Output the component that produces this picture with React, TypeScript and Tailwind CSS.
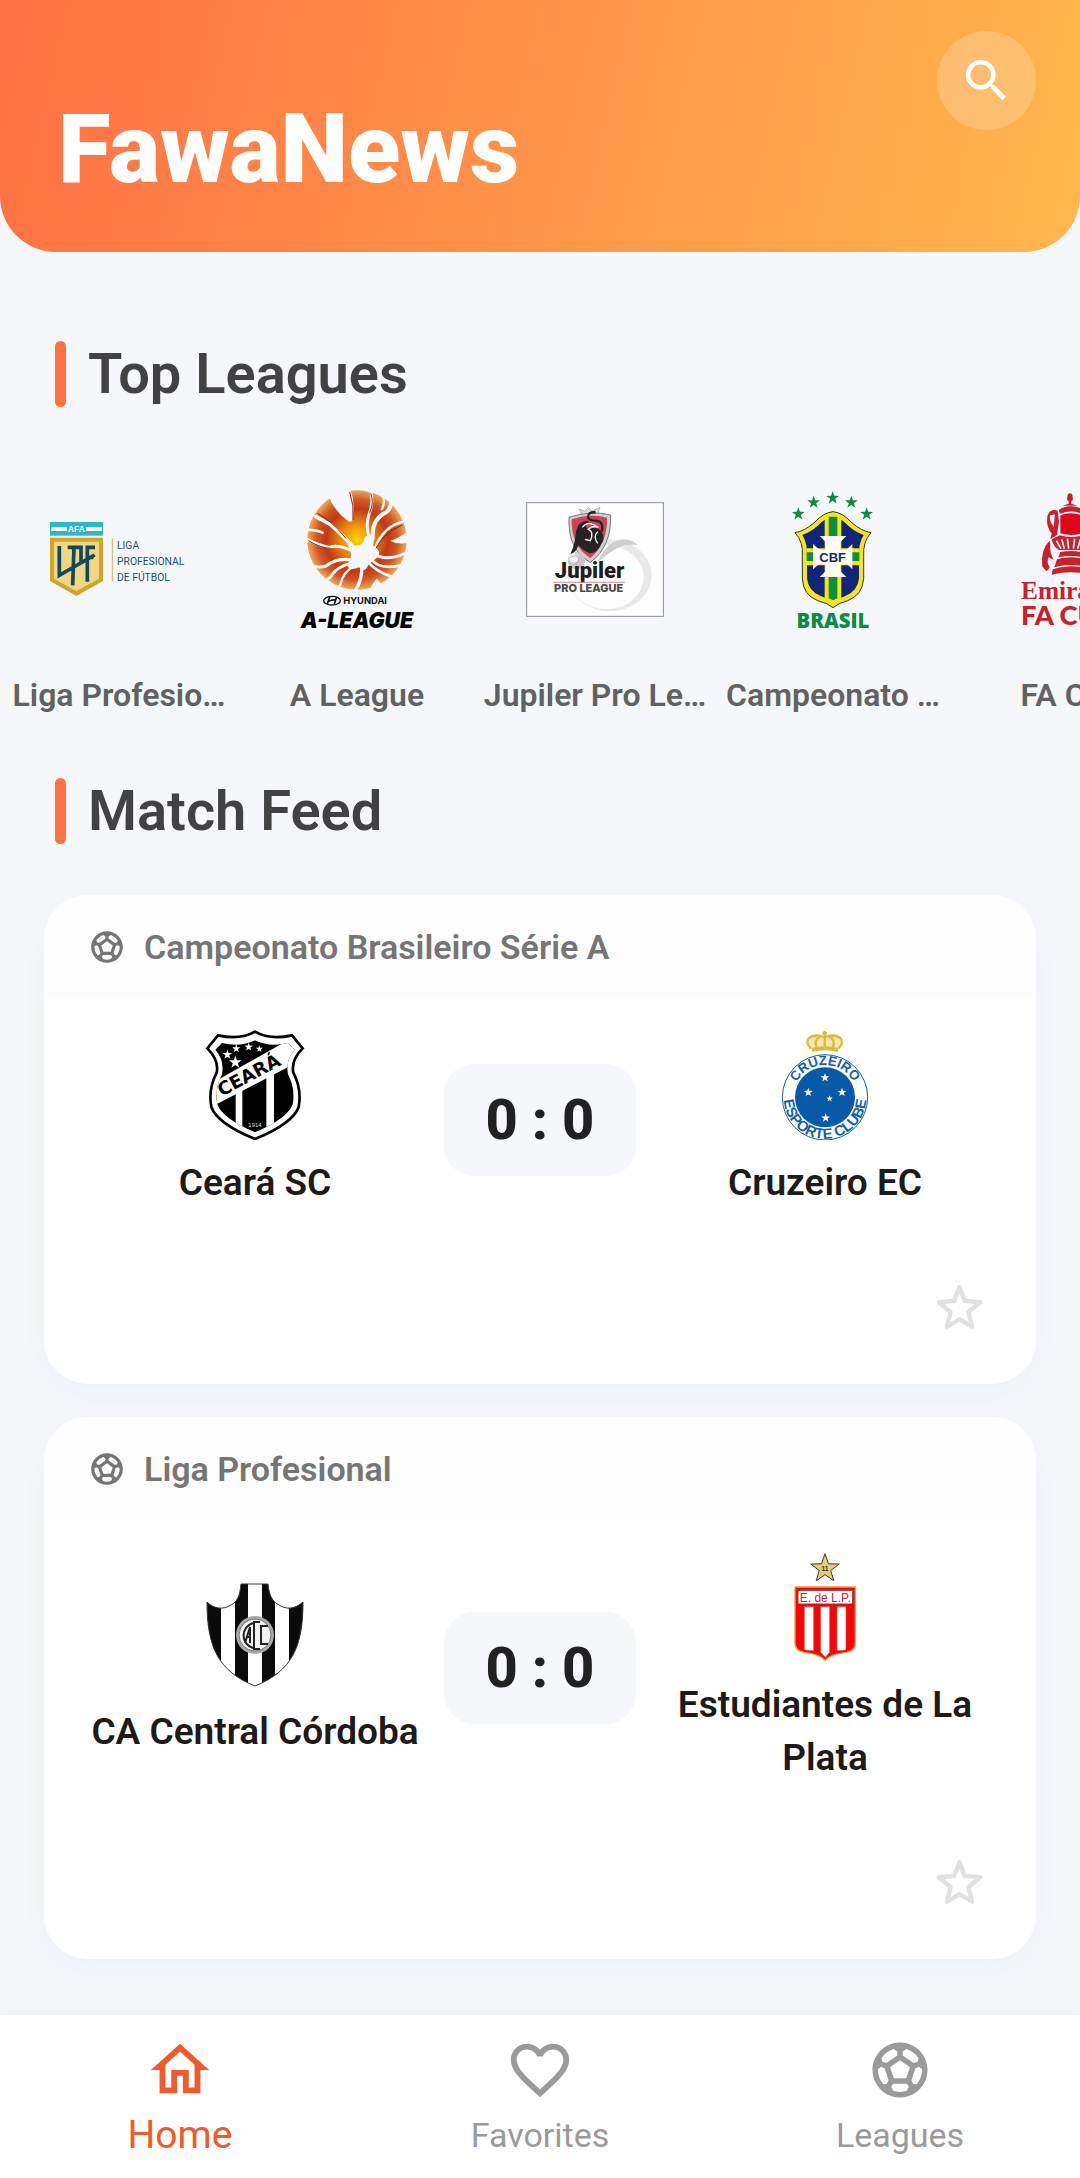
import type { ReactNode } from "react";
import {
  MdFavoriteBorder,
  MdOutlineHome,
  MdOutlineSportsSoccer,
  MdSearch,
} from "react-icons/md";

// Five-pointed star used by several crests
function Star({ x, y, r, fill, stroke }: { x: number; y: number; r: number; fill: string; stroke?: string }) {
  const points = Array.from({ length: 10 }, (_, i) => {
    const radius = i % 2 === 0 ? r : r * 0.4;
    const angle = (Math.PI / 5) * i - Math.PI / 2;
    return `${x + radius * Math.cos(angle)},${y + radius * Math.sin(angle)}`;
  }).join(" ");
  return <polygon points={points} fill={fill} stroke={stroke} strokeWidth={stroke ? 3 : 0} />;
}

function LigaProfesionalLogo() {
  return (
    <svg viewBox="150 60 414 414" className="size-full">
      <rect x="150" y="156" width="159" height="41" fill="#2bb8cf" />
      <rect x="154" y="172" width="47" height="11" fill="#fff" />
      <rect x="258" y="172" width="47" height="11" fill="#fff" />
      <text x="229" y="187" textAnchor="middle" fontFamily="Liberation Sans" fontWeight="700" fontSize="25" fill="#fff">AFA</text>
      <path d="M150 203H309V333L229 378L150 333Z" fill="#cfa52c" />
      <path d="M162 215H297V326L229 364L162 326Z" fill="#f3d681" />
      <path d="M178 228V316L284 255M203 232H222L218 346M222 232H243V282M262 335V232H285M262 262H280" fill="none" stroke="#11495f" strokeWidth="11" />
      <path d="M337 204V334" stroke="#d6b45a" strokeWidth="3" />
      <g fontFamily="Roboto" fontSize="31" fill="#1b5273">
        <text x="351" y="238">LIGA</text>
        <text x="351" y="286">PROFESIONAL</text>
        <text x="351" y="333">DE FÚTBOL</text>
      </g>
    </svg>
  );
}

function ALeagueLogo() {
  return (
    <svg viewBox="861 60 414 414" className="size-full">
      <defs>
        <radialGradient id="aleague" gradientUnits="userSpaceOnUse" cx="1068" cy="210" r="150">
          <stop offset="0" stopColor="#ffd400" />
          <stop offset=".3" stopColor="#ee9010" />
          <stop offset=".62" stopColor="#c03a16" />
          <stop offset=".8" stopColor="#cf5424" />
          <stop offset="1" stopColor="#f0ac55" />
        </radialGradient>
      </defs>
      <circle cx="1068" cy="210" r="149" fill="url(#aleague)" />
      <g fill="#f5f7fb">
        <path d="M980 72Q1000 125 1040 152Q1058 165 1057 130Q1062 90 1046 55Z" />
        <path d="M1038 222Q1085 240 1092 200Q1128 185 1116 228Q1150 245 1122 268L1102 285Q1090 312 1074 292Q1045 305 1038 284Q1062 255 1038 222Z" />
        <path d="M1215 188Q1190 205 1168 212Q1190 225 1222 218Z" />
        <path d="M1100 370Q1118 335 1128 325Q1140 345 1150 348L1130 372Z" />
      </g>
      <g fill="none" stroke="#f5f7fb" strokeLinecap="round">
        <path strokeWidth="9" d="M1105 205Q1092 165 1105 130Q1118 95 1109 62" />
        <path strokeWidth="12" d="M1115 205Q1112 150 1150 130Q1172 120 1170 88" />
        <path strokeWidth="7" d="M1147 82Q1152 102 1142 118" />
        <path strokeWidth="8" d="M1120 240Q1145 170 1203 156" />
        <path strokeWidth="9" d="M1118 252Q1155 275 1213 250" />
        <path strokeWidth="8" d="M1110 265Q1130 300 1198 287" />
        <path strokeWidth="8" d="M1100 275Q1125 305 1172 320" />
        <path strokeWidth="10" d="M1082 285Q1085 330 1062 362" />
        <path strokeWidth="7" d="M1060 288Q1025 305 1018 345Q1010 355 1000 358" />
        <path strokeWidth="9" d="M1055 278Q1010 290 995 312Q985 330 968 332" />
        <path strokeWidth="9" d="M1050 270Q1010 262 975 288Q960 293 944 290" />
        <path strokeWidth="9" d="M1060 245Q1010 222 985 232Q950 225 918 208" />
        <path strokeWidth="11" d="M1058 232Q1020 190 990 165Q965 150 944 140" />
        <path strokeWidth="8" d="M920 180Q945 178 965 188" />
      </g>
      <g fill="none" stroke="#8e2114" strokeWidth="3">
        <path d="M1046 66Q1060 105 1056 150M1109 70Q1120 95 1106 130M949 130Q990 150 1035 205M922 212Q960 235 990 235M1125 235Q1150 185 1205 165" />
      </g>
      <ellipse cx="993" cy="392" rx="25" ry="13" fill="none" stroke="#111" strokeWidth="4" />
      <path d="M986 381L979 402M1007 381L1000 402M984 394Q993 388 1003 390" fill="none" stroke="#111" strokeWidth="5" />
      <text x="1027" y="402" fontFamily="Inter" fontWeight="700" fontSize="28" fill="#111">HYUNDAI</text>
      <text x="1068" y="474" textAnchor="middle" fontFamily="Inter" fontWeight="900" fontStyle="italic" fontSize="64" fill="#000">A-LEAGUE</text>
    </svg>
  );
}

function JupilerLogo() {
  return (
    <svg viewBox="255 60 414 414" className="size-full">
      <rect x="257" y="98" width="410" height="341" fill="#fefefe" stroke="#8c8c8c" strokeWidth="3" />
      <path
        fillRule="evenodd"
        fill="#e8e8e8"
        d="M380 316A126 108 0 1 1 632 316A126 108 0 1 1 380 316ZM384 322A112 96 0 1 0 608 322A112 96 0 1 0 384 322Z"
      />
      <path d="M470 275Q500 210 550 208Q580 212 590 225Q540 215 490 262Z" fill="#cecece" />
      <path d="M413 116L432 124L442 112L452 124L477 112L468 136H424Z" fill="#dcdcdc" stroke="#999" strokeWidth="2" />
      <path d="M384 142Q450 120 509 135Q512 230 448 277Q380 240 384 142Z" fill="#cfcfcf" stroke="#777" strokeWidth="3" />
      <path d="M392 148Q450 130 498 143Q500 220 448 264Q390 230 392 148Z" fill="#cc4258" />
      <path d="M405 185Q412 150 445 152Q425 165 440 178Q470 165 484 190Q492 210 480 222Q470 250 445 250Q425 240 412 226Q405 250 388 252Q402 225 405 185Z" fill="#252323" />
      <path d="M464 127Q440 125 441 142Q445 152 465 152Q490 155 482 185" fill="none" stroke="#252323" strokeWidth="7" />
      <path d="M424 172Q440 150 472 172Q455 165 442 178Q460 185 448 212L432 208M470 185Q455 200 470 220" fill="none" stroke="#fff" strokeWidth="4" />
      <circle cx="406" cy="272" r="26" fill="#c9c9c9" />
      <circle cx="399" cy="264" r="14" fill="#f1f1f1" />
      <path d="M388 262L406 256L415 270L402 284" fill="none" stroke="#999" strokeWidth="2" />
      <text x="446" y="324" textAnchor="middle" fontFamily="Roboto" fontWeight="900" fontSize="66" fill="#1f1d1d">Jupiler</text>
      <path d="M336 337H551" stroke="#d88a94" strokeWidth="3" />
      <text x="443" y="367" textAnchor="middle" fontFamily="Inter" fontWeight="800" fontSize="33" fill="#4a4848">PRO LEAGUE</text>
    </svg>
  );
}

function BrasilLogo() {
  const shield = "M1176 125Q1205 128 1230 156Q1262 184 1290 188Q1265 215 1268 260V325Q1265 375 1220 392Q1190 400 1176 413Q1162 400 1130 392Q1086 375 1084 325V260Q1088 215 1062 188Q1090 184 1122 156Q1147 128 1176 125Z";
  return (
    <svg viewBox="969 60 414 414" className="size-full">
      <Star x={1072} y={132} r={20} fill="#0b8b45" />
      <Star x={1118} y={97} r={20} fill="#0b8b45" />
      <Star x={1175} y={84} r={20} fill="#0b8b45" />
      <Star x={1231} y={97} r={20} fill="#0b8b45" />
      <Star x={1277} y={132} r={20} fill="#0b8b45" />
      <path d={shield} fill="#f7e51c" stroke="#25324f" strokeWidth="3" />
      <path d="M1176 140Q1199 142 1220 166Q1245 188 1268 195Q1252 220 1254 260V325Q1250 364 1213 378Q1190 386 1176 396Q1162 386 1139 378Q1102 364 1098 325V260Q1100 220 1084 195Q1107 188 1132 166Q1153 142 1176 140Z" fill="#10247a" />
      <path d="M1151 135H1201V392L1176 402L1151 392Z" fill="#f7e51c" />
      <path d="M1098 235H1254V286H1098Z" fill="#f7e51c" />
      <path d="M1163 140H1189V385L1176 391L1163 385Z" fill="#0d8f3d" />
      <path d="M1097 247H1255V273H1097Z" fill="#0d8f3d" />
      <path d="M1136 198H1216L1198 216V240L1218 238L1234 222V298L1218 282L1198 284V304L1216 321H1136L1154 304V284L1134 282L1116 298V222L1134 238L1154 240V216Z" fill="#fff" />
      <text x="1175" y="275" textAnchor="middle" fontFamily="Liberation Sans" fontWeight="700" fontSize="39" fill="#1a2a6c">CBF</text>
      <text x="1176" y="474" textAnchor="middle" fontFamily="Open Sans" fontWeight="800" fontSize="61" fill="#0b8b45">BRASIL</text>
    </svg>
  );
}

function FaCupLogo() {
  return (
    <svg viewBox="363 60 414 414" className="size-full">
      <g fill="#c9202c">
        <path d="M559 82Q559 70 567 70Q575 70 575 82Q578 90 571 94V101L590 107H545L563 101V94Q556 90 559 82Z" />
        <path d="M533 120Q550 108 570 109Q590 108 607 120L603 131Q570 118 537 131Z" />
        <path d="M538 136Q570 123 602 136V190Q570 200 538 190Z" fill="#e0061a" />
        <path d="M530 122Q500 112 498 150Q498 175 512 190L508 208L528 195L534 155ZM522 133L518 170Q502 150 508 136Z" />
        <path d="M610 122Q640 112 642 150Q642 175 628 190L632 208L612 195L606 155Z" />
        <path d="M536 196Q570 206 604 196L628 208Q622 232 606 240H534Q518 232 512 208Z" />
        <path d="M505 212Q478 240 484 290L497 304L506 292Q495 275 503 262L518 270Q505 245 508 222Z" />
        <path d="M538 246Q570 240 602 246L608 262Q570 254 532 262Z" />
        <path d="M528 268Q570 256 612 268L620 292Q570 278 520 292Z" />
        <path d="M515 298Q570 280 625 298L628 314Q570 300 512 314Z" />
      </g>
      <path d="M526 212L540 236M542 208L550 236M559 206L563 236M581 206L577 236M598 208L590 236" stroke="#f5f7fb" strokeWidth="5" />
      <text x="420" y="386" fontFamily="Liberation Serif" fontWeight="700" fontSize="76" fill="#c9202c">Emirates</text>
      <text x="420" y="464" fontFamily="Lato" fontWeight="900" fontSize="82" fill="#c9202c">FA CUP</text>
    </svg>
  );
}

function CearaCrest() {
  const shield = "M195 32Q240 58 306 43L338 82Q302 118 310 155Q336 205 326 258Q308 308 195 354Q82 308 64 258Q54 205 80 155Q88 118 52 82L84 43Q150 58 195 32Z";
  return (
    <svg viewBox="30 27 330 330" className="size-full">
      <defs>
        <clipPath id="ceara">
          <path d="M195 58Q240 80 294 66L314 86Q286 118 294 160Q317 205 308 250Q294 292 195 334Q96 292 82 250Q73 205 96 160Q104 118 76 86L96 66Q150 80 195 58Z" />
        </clipPath>
      </defs>
      <path d={shield} fill="#fff" stroke="#000" strokeWidth="8" />
      <g clipPath="url(#ceara)">
        <rect x="30" y="27" width="330" height="330" fill="#000" />
        <path d="M137 180H157V357H137ZM229 140H252V357H229Z" fill="#fff" />
        <path d="M60 190L290 60L345 50V112L60 260Z" fill="#fff" />
      </g>
      <text transform="translate(95 227) rotate(-28)" fontFamily="DejaVu Sans" fontWeight="700" fontSize="55" fill="#000">CEARÁ</text>
      <Star x={136} y={124} r={20} fill="#fff" />
      <Star x={112} y={101} r={15} fill="#fff" />
      <Star x={139} y={83} r={13} fill="#fff" />
      <Star x={176} y={78} r={13} fill="#fff" />
      <Star x={208} y={84} r={11} fill="#fff" />
      <text x="195" y="317" textAnchor="middle" fontFamily="Liberation Sans" fontSize="18" fill="#ddd">1914</text>
    </svg>
  );
}

function CruzeiroCrest() {
  return (
    <svg viewBox="0 27 330 330" className="size-full">
      <defs>
        <path id="cruzeiro-top" d="M68 229A97 97 0 0 1 262 229" />
        <path id="cruzeiro-bottom" d="M44 202A124 124 0 1 0 286 202" />
      </defs>
      <path d="M122 86Q100 62 118 50Q136 40 164 48Q192 40 210 50Q228 62 206 86Z" fill="#f6e6ae" />
      <g fill="none" stroke="#e0b83a" strokeWidth="7">
        <path d="M122 82Q104 62 118 50Q136 38 164 48Q192 38 210 50Q224 62 206 82" />
        <path d="M140 80Q130 56 150 46M188 80Q198 56 178 46M164 30V80M157 37H171" />
        <path d="M126 87Q164 76 204 87" strokeWidth="12" />
      </g>
      <circle cx="165" cy="229" r="128" fill="#fff" stroke="#1560a8" strokeWidth="3" />
      <circle cx="165" cy="229" r="90" fill="#075aa8" />
      <g fontFamily="Liberation Sans" fontWeight="700" fill="#1560a8">
        <text fontSize="40"><textPath href="#cruzeiro-top" startOffset="50%" textAnchor="middle">CRUZEIRO</textPath></text>
        <text fontSize="44"><textPath href="#cruzeiro-bottom" startOffset="50%" textAnchor="middle">ESPORTE CLUBE</textPath></text>
      </g>
      <Star x={165} y={170} r={14} fill="#fff" />
      <Star x={115} y={214} r={14} fill="#fff" />
      <Star x={216} y={214} r={14} fill="#fff" />
      <Star x={179} y={233} r={10} fill="#fff" />
      <Star x={167} y={291} r={14} fill="#fff" />
    </svg>
  );
}

function CordobaCrest() {
  const shield = "M41 5H68C69 17 73 23 79 26C87 31 95 30 103 23C103 68 92 92 55 107C18 92 7 68 7 23C14 30 23 31 31 26C37 23 40 17 41 5Z";
  return (
    <svg viewBox="0 0 110 110" className="size-full">
      <defs>
        <clipPath id="cordoba">
          <path d={shield} />
        </clipPath>
      </defs>
      <g clipPath="url(#cordoba)">
        <rect width="110" height="110" fill="#fff" />
        <path d="M6 0H21V110H6ZM35 0H48V110H35ZM62 0H75V110H62ZM89 0H104V110H89Z" fill="#0a0a0a" />
      </g>
      <path d={shield} fill="none" stroke="#333" strokeWidth="1" />
      <circle cx="55" cy="56" r="19" fill="#aaa" />
      <circle cx="55" cy="56" r="16" fill="#f2f2f2" stroke="#777" strokeWidth="1" />
      <g fill="none" stroke="#222" strokeWidth="2">
        <path d="M53 44A13 13 0 0 0 53 69M45 64L50 48V64M46 58H50M60 43H54V70H60M68 47H61V65H68" />
      </g>
    </svg>
  );
}

function EstudiantesCrest() {
  return (
    <svg viewBox="510 156 330 330" className="size-full">
      <Star x={675} y={206} r={45} fill="#e8cd73" stroke="#3a3a3a" />
      <text x="675" y="213" textAnchor="middle" fontFamily="Liberation Sans" fontWeight="700" fontSize="20" fill="#333">11</text>
      <path d="M585 261H766V430Q766 452 740 457Q690 462 675 481Q660 462 612 457Q585 452 585 430Z" fill="#f50505" stroke="#e8a13e" strokeWidth="4" />
      <path d="M594 271H758V312H594Z" fill="#fff" stroke="#b3262b" strokeWidth="3" />
      <path d="M613 320H641V452L613 450ZM662 320H689V457L676 472L662 457ZM711 320H738V450L711 452Z" fill="#fff" stroke="#d9534f" strokeWidth="2" />
      <text x="676" y="306" textAnchor="middle" fontFamily="Liberation Sans" fontSize="36" fill="#c1272d">E. de L.P.</text>
    </svg>
  );
}

// Names are already shortened to the width of a carousel item
const leagues: { name: string; logo: ReactNode }[] = [
  { name: "Liga Profesio…", logo: <LigaProfesionalLogo /> },
  { name: "A League", logo: <ALeagueLogo /> },
  { name: "Jupiler Pro Le…", logo: <JupilerLogo /> },
  { name: "Campeonato …", logo: <BrasilLogo /> },
  { name: "FA Cup", logo: <FaCupLogo /> },
];

type Team = { name: string; crest: ReactNode };

const matches: { league: string; home: Team; away: Team; score: string }[] = [
  {
    league: "Campeonato Brasileiro Série A",
    home: { name: "Ceará SC", crest: <CearaCrest /> },
    away: { name: "Cruzeiro EC", crest: <CruzeiroCrest /> },
    score: "0 : 0",
  },
  {
    league: "Liga Profesional",
    home: { name: "CA Central Córdoba", crest: <CordobaCrest /> },
    away: { name: "Estudiantes de La Plata", crest: <EstudiantesCrest /> },
    score: "0 : 0",
  },
];

function SectionTitle({ children }: { children: ReactNode }) {
  return (
    <div className="flex items-center gap-[22px] px-[55px]">
      <span className="h-[66px] w-[11px] rounded-full bg-[#ff7043]" />
      <h2 className="text-[56px] leading-[66px] font-semibold text-[#424242]">{children}</h2>
    </div>
  );
}

function TeamColumn({ team }: { team: Team }) {
  return (
    <div className="flex min-w-0 flex-1 flex-col items-center gap-4">
      <div className="size-[110px]">{team.crest}</div>
      <p className="text-center text-[37px] leading-[53px] font-semibold text-[#1e1a18]">{team.name}</p>
    </div>
  );
}

export default function App() {
  return (
    <div className="flex min-h-screen flex-col bg-[#f5f7fb] font-[Roboto,sans-serif]">
      {/* Header */}
      <header className="flex items-start justify-between rounded-b-[56px] bg-[linear-gradient(103deg,#ff7043,#ffb74d)] pt-[31px] pr-11 pb-[51px] pl-[58px]">
        <h1 className="mt-[66px] text-[96px] leading-[104px] font-black text-white">FawaNews</h1>
        <button type="button" aria-label="Search" className="flex size-[99px] items-center justify-center rounded-full bg-white/20 text-white">
          <MdSearch className="size-[55px]" />
        </button>
      </header>

      <main className="flex-1">
        {/* Leagues carousel */}
        <section className="mt-[89px]">
          <SectionTitle>Top Leagues</SectionTitle>
          <ul className="mt-[83px] flex gap-4 overflow-hidden pl-2">
            {leagues.map((league) => (
              <li key={league.name} className="w-[222px] shrink-0">
                <a href="#leagues" className="flex flex-col items-center gap-[47px]">
                  <span className="size-[138px]">{league.logo}</span>
                  <span className="text-[32px] leading-10 font-semibold whitespace-nowrap text-[#616161]">{league.name}</span>
                </a>
              </li>
            ))}
          </ul>
        </section>

        {/* Match cards */}
        <section className="mt-[63px] mb-14">
          <SectionTitle>Match Feed</SectionTitle>
          <div className="mt-[51px] flex flex-col gap-[33px] px-11">
            {matches.map((match) => (
              <article key={match.league} className="overflow-hidden rounded-[44px] bg-white shadow-[0_11px_28px_rgba(30,50,80,0.03)]">
                <div className="flex h-[103px] items-center gap-[18px] bg-[#fdfdfd] px-11 text-[#757575]">
                  <MdOutlineSportsSoccer className="size-[38px]" />
                  <h3 className="text-[34px] leading-10 font-semibold">{match.league}</h3>
                </div>
                <div className="flex items-center gap-[22px] px-11 pt-8 pb-[49px]">
                  <TeamColumn team={match.home} />
                  <div className="flex h-28 w-48 items-center justify-center rounded-[30px] bg-[#f5f7fb] text-[56px] leading-[66px] font-extrabold text-[#212121]">
                    {match.score}
                  </div>
                  <TeamColumn team={match.away} />
                </div>
                <div className="flex justify-end pr-[27px] pb-[27px]">
                  <button type="button" aria-label="Add to favorites" className="p-[22px] text-[#e0e0e0]">
                    <svg viewBox="0 0 24 24" className="size-[55px]" fill="none" stroke="currentColor" strokeWidth="1.9" strokeLinejoin="round">
                      <path d="M12 3.1L14.3 9.1L21 9.7L15.9 14L17.5 20.4L12 17.1L6.5 20.4L8.1 14L3 9.7L9.7 9.1Z" />
                    </svg>
                  </button>
                </div>
              </article>
            ))}
          </div>
        </section>
      </main>

      {/* Bottom navigation */}
      <nav className="grid grid-cols-3 bg-white pt-5 pb-[23px] text-[#9a9a9a] shadow-[0_-2px_8px_rgba(30,50,80,0.03)]">
        <a href="#home" className="flex flex-col items-center gap-[10px] text-[#f15a29]">
          <span className="flex size-[70px] items-center justify-center">
            <MdOutlineHome className="size-[70px]" />
          </span>
          <span className="text-[39px] leading-10">Home</span>
        </a>
        <a href="#favorites" className="flex flex-col items-center gap-[10px]">
          <span className="flex size-[70px] items-center justify-center">
            <MdFavoriteBorder className="size-[70px]" />
          </span>
          <span className="text-[34px] leading-10">Favorites</span>
        </a>
        <a href="#leagues" className="flex flex-col items-center gap-[10px]">
          <span className="flex size-[70px] items-center justify-center">
            <MdOutlineSportsSoccer className="size-[66px]" />
          </span>
          <span className="text-[34px] leading-10">Leagues</span>
        </a>
      </nav>
    </div>
  );
}
